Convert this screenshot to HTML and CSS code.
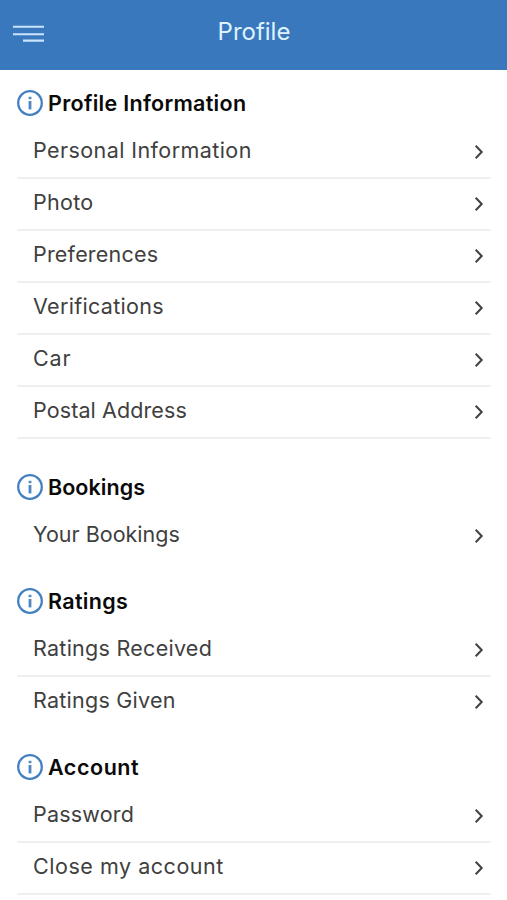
FILE: index.html
```html
<!DOCTYPE html>
<html lang="en">
<head>
<meta charset="utf-8">
<title>Profile</title>
<link rel="stylesheet" href="styles.css">
</head>
<body>
<svg class="defs" aria-hidden="true">
  <symbol id="info" viewBox="0 0 26 26"><circle cx="13" cy="13" r="11.8" fill="none" stroke="#4380c3" stroke-width="2.3"/><rect x="11.6" y="6.8" width="2.8" height="2.4" fill="#4f86c4"/><rect x="11.6" y="11" width="2.8" height="8.4" fill="#4f86c4"/></symbol>
  <symbol id="chevron" viewBox="0 0 10 16"><path d="M1.7 1.8 7.7 8 1.7 14.2" fill="none" stroke="#404040" stroke-width="2"/></symbol>
</svg>
<header class="bar">
  <svg class="menu" viewBox="0 0 32 18"><path d="M0 1.8H31M0 9.2H31M10 15.6H31" stroke="#c9e4fb" stroke-width="2.1"/></svg>
  <h1 class="title">Profile</h1>
</header>
<main class="content">
  <section class="group group-profile">
    <h2 class="heading"><svg class="info"><use href="#info"/></svg><span class="h-profile">Profile Information</span></h2>
    <a class="row"><span class="t-personal">Personal Information</span><svg class="chevron"><use href="#chevron"/></svg></a>
    <a class="row"><span class="t-photo">Photo</span><svg class="chevron"><use href="#chevron"/></svg></a>
    <a class="row"><span class="t-preferences">Preferences</span><svg class="chevron"><use href="#chevron"/></svg></a>
    <a class="row"><span class="t-verifications">Verifications</span><svg class="chevron"><use href="#chevron"/></svg></a>
    <a class="row"><span class="t-car">Car</span><svg class="chevron"><use href="#chevron"/></svg></a>
    <a class="row"><span class="t-postal">Postal Address</span><svg class="chevron"><use href="#chevron"/></svg></a>
  </section>
  <section class="group">
    <h2 class="heading"><svg class="info"><use href="#info"/></svg><span class="h-bookings">Bookings</span></h2>
    <a class="row plain"><span class="t-bookings">Your Bookings</span><svg class="chevron"><use href="#chevron"/></svg></a>
  </section>
  <section class="group">
    <h2 class="heading"><svg class="info"><use href="#info"/></svg><span class="h-ratings">Ratings</span></h2>
    <a class="row"><span class="t-received">Ratings Received</span><svg class="chevron"><use href="#chevron"/></svg></a>
    <a class="row plain"><span class="t-given">Ratings Given</span><svg class="chevron"><use href="#chevron"/></svg></a>
  </section>
  <section class="group">
    <h2 class="heading"><svg class="info"><use href="#info"/></svg><span class="h-account">Account</span></h2>
    <a class="row"><span class="t-password">Password</span><svg class="chevron"><use href="#chevron"/></svg></a>
    <a class="row"><span class="t-close">Close my account</span><svg class="chevron"><use href="#chevron"/></svg></a>
  </section>
</main>
</body>
</html>
```
FILE: styles.css
```css
* { box-sizing: border-box; }
body { margin: 0; height: 900px; overflow: hidden; background: #fff; font-family: Inter, "Liberation Sans", sans-serif; }
.defs { display: none; }
.bar { height: 70px; padding: 0 12px 7px 13px; background: #3a78bd; display: grid; grid-template-columns: 32px 1fr 32px; align-items: center; }
.menu { width: 32px; height: 18px; margin-top: 4px; }
.title { margin: 0; text-align: center; font-size: 24px; line-height: 30px; font-weight: 400; color: #dff2ff; }
.content { padding: 8.5px 16px 0 17px; }
.group { margin-bottom: 14px; }
.group-profile { margin-bottom: 24px; }
.heading { margin: 0; height: 48px; display: flex; align-items: center; gap: 5px; font-size: 21.5px; line-height: 28px; font-weight: 600; color: #0a0a0a; }
.info { width: 26px; height: 26px; flex: none; }
.row { height: 52px; padding: 0 7px 4px 16px; display: flex; align-items: center; justify-content: space-between; border-bottom: 2px solid #efefef; font-size: 21.5px; line-height: 28px; font-weight: 400; color: #404040; white-space: nowrap; }
.plain { border-bottom-color: transparent; }
.chevron { width: 10px; height: 16px; margin-top: 4px; flex: none; }

/* Per-label tracking */
.h-profile { letter-spacing: .29px; }
.h-bookings { letter-spacing: .05px; }
.h-ratings { letter-spacing: .33px; }
.h-account { letter-spacing: .55px; }
.t-personal { letter-spacing: .42px; }
.t-photo { letter-spacing: .3px; }
.t-preferences { letter-spacing: .2px; }
.t-verifications { letter-spacing: .32px; }
.t-car { letter-spacing: .8px; }
.t-postal { letter-spacing: .1px; }
.t-bookings { letter-spacing: 0; }
.t-received { letter-spacing: .27px; }
.t-given { letter-spacing: .25px; }
.t-password { letter-spacing: .2px; }
.t-close { letter-spacing: .53px; }
```
